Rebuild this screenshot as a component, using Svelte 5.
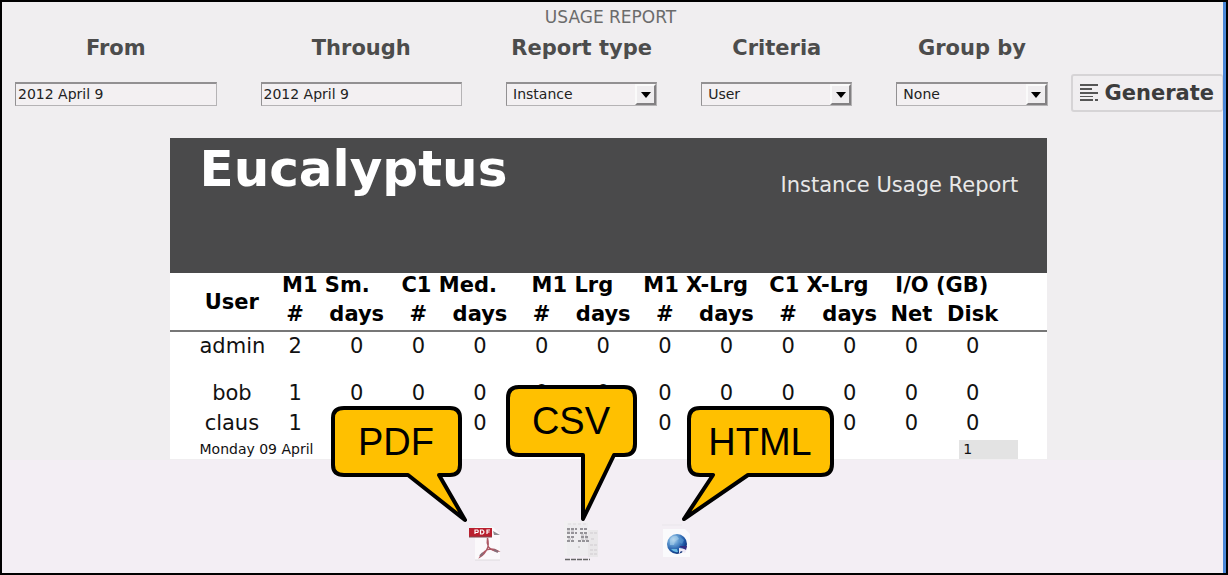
<script>
  let from = $state('2012 April 9');
  let through = $state('2012 April 9');
  let reportType = $state('Instance');
  let criteria = $state('User');
  let groupBy = $state('None');

  const groups = ['M1 Sm.', 'C1 Med.', 'M1 Lrg', 'M1 X-Lrg', 'C1 X-Lrg', 'I/O (GB)'];
  const units = ['#', 'days', '#', 'days', '#', 'days', '#', 'days', '#', 'days', 'Net', 'Disk'];
  const rows = [
    { user: 'admin', values: [2, 0, 0, 0, 0, 0, 0, 0, 0, 0, 0, 0] },
    { user: 'bob', values: [1, 0, 0, 0, 0, 0, 0, 0, 0, 0, 0, 0] },
    { user: 'claus', values: [1, 0, 0, 0, 0, 0, 0, 0, 0, 0, 0, 0] }
  ];
</script>

{#snippet arrow()}
  <span class="arrow" aria-hidden="true">
    <svg viewBox="0 0 10 6" width="10" height="6"><path d="M0 0H10L5 6Z" fill="#000" /></svg>
  </span>
{/snippet}

<main class="page">
  <h1>USAGE REPORT</h1>

  <form class="filters" onsubmit={(e) => e.preventDefault()}>
    <div class="fields">
      <div class="field">
        <label for="from">From</label>
        <input id="from" type="text" bind:value={from} />
      </div>
      <div class="field">
        <label for="through">Through</label>
        <input id="through" type="text" bind:value={through} />
      </div>
      <div class="field">
        <label for="type">Report type</label>
        <div class="pick">
          <select id="type" bind:value={reportType}><option>Instance</option></select>
          {@render arrow()}
        </div>
      </div>
      <div class="field">
        <label for="criteria">Criteria</label>
        <div class="pick">
          <select id="criteria" bind:value={criteria}><option>User</option></select>
          {@render arrow()}
        </div>
      </div>
      <div class="field">
        <label for="group">Group by</label>
        <div class="pick">
          <select id="group" bind:value={groupBy}><option>None</option></select>
          {@render arrow()}
        </div>
      </div>
    </div>
    <button type="submit">
      <svg viewBox="0 0 19 20" width="19" height="20" aria-hidden="true">
        <g fill="#555">
          <rect x="0" y="1" width="18" height="2" />
          <rect x="0" y="5" width="12" height="2" />
          <rect x="0" y="9" width="18" height="2" />
          <rect x="0" y="13" width="13" height="1" />
          <rect x="0" y="16" width="13" height="2" />
          <rect x="15" y="16" width="3" height="2" />
        </g>
      </svg>
      Generate
    </button>
  </form>

  <section class="lower">
    <article class="report">
      <header>
        <h2>Eucalyptus</h2>
        <p>Instance Usage Report</p>
      </header>
      <table>
        <colgroup>
          <col class="user-col" />
          {#each units.slice(1) as _}<col class="value-col" />{/each}
          <col />
        </colgroup>
        <thead>
          <tr>
            <th class="name" rowspan="2" scope="col">User</th>
            {#each groups as group}<th colspan="2" scope="colgroup">{group}</th>{/each}
          </tr>
          <tr>
            {#each units as unit}<th scope="col">{unit}</th>{/each}
          </tr>
        </thead>
        <tbody>
          {#each rows as row}
            <tr>
              <td class="name">{row.user}</td>
              {#each row.values as value}<td>{value}</td>{/each}
            </tr>
          {/each}
        </tbody>
      </table>
      <footer>
        <span>Monday 09 April</span>
        <span class="page-number">1</span>
      </footer>
    </article>

    <nav aria-label="Download">
      <a href="#pdf">
        <svg class="icon" viewBox="0 0 34 42" width="34" height="42" aria-hidden="true">
          <path d="M2 4H24V7H2Z" fill="#eaf1f1" />
          <path d="M7 6H25L32 13V39H7Z" fill="#fbf9fb" />
          <path d="M7 39H32" stroke="#dedadd" />
          <path d="M25 10L32 14L26 14Z" fill="#8f8c91" />
          <rect x="1" y="7" width="23" height="9" fill="#b9202f" />
          <path d="M1 16H24" stroke="#7d4a50" />
          <path d="M7 13V9H9.500Q11 10 9.500 11.500H7M12.500 9V13H14.500Q17.500 11 14.500 9ZM19 13V9H22M19 11H21.500" fill="none" stroke="#fff" stroke-width="1.200" />
          <path d="M19.500 17Q21 24 19.500 27Q17 33 12 36Q14 32 19.500 28.500Q25 27 30 30Q24 30 20.500 26Q18.500 22 19.500 17" fill="none" stroke="#ae5965" stroke-width="1.400" />
          <path d="M12 35L15 32M26 29L30 31" stroke="#866e78" stroke-width="2" />
        </svg>
        <svg class="callout pdf" viewBox="330 404 142 120" width="142" height="120" role="img" aria-label="PDF">
          <path d="M345 408H451Q461 408 461 418V465Q461 475 451 475H440L466 520L409 475H345Q334 475 334 465V418Q334 408 345 408Z" />
          <text x="397" y="455">PDF</text>
        </svg>
      </a>
      <a href="#csv">
        <svg class="icon" viewBox="0 0 34 42" width="34" height="42" aria-hidden="true">
          <path d="M0 0H26V35H0Z" fill="#f2f0f2" />
          <path d="M3 2H24V35H3Z" fill="#eeedef" />
          <path d="M4 3H22" stroke="#dedcde" stroke-dasharray="3 2" />
          <path d="M24 9H34V36H24Z" fill="#e9e7e9" />
          <path d="M26 12H33M27 18H31M26 24H33M26 29H33M26 33H33" stroke="#dcd9dc" stroke-width="2" stroke-dasharray="3 1" />
          <path d="M3 8H13M16 8H23M3 12H13M16 12H24M3 16H10M17 16H24M3 20H10M14 20H26" stroke="#959398" stroke-width="2" stroke-dasharray="3 1" />
          <path d="M3 10H11M17 14H23M4 18H9M17 18H25" stroke="#b7b4b9" stroke-dasharray="3 1" />
          <path d="M15 25V27" stroke="#bbb" />
          <path d="M1 38.500H26" stroke="#666" stroke-width="1.500" stroke-dasharray="5 1" />
        </svg>
        <svg class="callout csv" viewBox="504 383 136 141" width="136" height="141" role="img" aria-label="CSV">
          <path d="M519 387H624Q635 387 635 398V444Q635 455 624 455H614L583 519V455H519Q508 455 508 444V398Q508 387 519 387Z" />
          <text x="571" y="434">CSV</text>
        </svg>
      </a>
      <a href="#html">
        <svg class="icon" viewBox="0 0 34 42" width="34" height="42" aria-hidden="true">
          <defs>
            <radialGradient id="globe" cx="32%" cy="28%" r="80%">
              <stop offset="0" stop-color="#cbe1f2" />
              <stop offset="0.300" stop-color="#68a1d5" />
              <stop offset="0.700" stop-color="#1c56a5" />
              <stop offset="1" stop-color="#0b2669" />
            </radialGradient>
          </defs>
          <path d="M3 8H25L30 13V36H3Z" fill="#fafafc" />
          <path d="M2 4H22" stroke="#e9e6eb" />
          <circle cx="17" cy="23" r="10" fill="url(#globe)" />
          <path d="M10 18Q13 14 17 15L19 18L15 20L14 24L10 24Z" fill="#a9d1eb" opacity="0.600" />
          <path d="M20 16L24 19L22 23L19 21Z" fill="#5c9bd2" opacity="0.600" />
          <path d="M11 28Q14 32 18 31L17 28Z" fill="#69b9e1" />
          <path d="M19 27L27 28L25 32L21 30L19 33Z" fill="#ece8f5" />
          <path d="M19 25H27L26 29Z" fill="#352e83" />
        </svg>
        <svg class="callout html" viewBox="680 404 158 120" width="158" height="120" role="img" aria-label="HTML">
          <path d="M700 408H821Q832 408 832 419V464Q832 475 821 475H748L684 519L713 475H700Q689 475 689 464V419Q689 408 700 408Z" />
          <text x="760" y="455">HTML</text>
        </svg>
      </a>
    </nav>
  </section>
</main>

<style>
  :global(body) {
    margin: 0;
    font-family: "DejaVu Sans", sans-serif;
  }
  .page,
  .page * {
    box-sizing: border-box;
  }
  .page {
    border: 2px solid #000;
    background: linear-gradient(#4a87d8, #4a87d8) right / 3px 100% no-repeat #f0eef0;
    padding-right: 3px;
  }
  h1 {
    margin: 0;
    padding-right: 4px;
    font-size: 17px;
    line-height: 30px;
    font-weight: 400;
    text-align: center;
    color: #6b6b6b;
  }
  .filters {
    display: flex;
    align-items: flex-end;
    padding-left: 13px;
  }
  .fields {
    flex: 1;
    display: grid;
    grid-template-columns: 4fr 4fr 3fr 3fr 3fr;
    gap: 44px;
  }
  .field {
    min-width: 0;
    padding-bottom: 6px;
  }
  label {
    display: block;
    height: 50px;
    font-size: 21px;
    line-height: 32px;
    font-weight: 700;
    text-align: center;
    color: #4c4c4c;
    white-space: nowrap;
  }
  input,
  select {
    display: block;
    width: 100%;
    height: 24px;
    margin: 0;
    border: 1px solid #b5b3b5;
    border-top: 2px solid #929092;
    border-left-color: #929092;
    border-radius: 0;
    background: #f3f0f2;
    color: #222;
    font-family: inherit;
    font-size: 14px;
    padding: 0 2px 2px;
  }
  select {
    appearance: none;
    padding: 0 24px 2px 6px;
  }
  .pick {
    position: relative;
  }
  .arrow {
    position: absolute;
    top: 2px;
    right: 1px;
    bottom: 1px;
    width: 21px;
    display: flex;
    align-items: center;
    justify-content: center;
    border: 2px solid #fafafa;
    border-right-color: #828082;
    border-bottom-color: #828082;
    background: #efedef;
    pointer-events: none;
  }
  button {
    display: flex;
    align-items: center;
    gap: 6px;
    height: 38px;
    margin: 0 0 0 23px;
    padding: 0 8px 0 7px;
    border: 2px solid #d6d4d6;
    border-right-width: 1px;
    border-radius: 3px;
    background: #f0eef0;
    color: #3c3c3c;
    font-family: inherit;
    font-size: 21px;
    font-weight: 700;
  }
  .lower {
    margin-top: 26px;
    background: linear-gradient(#f0eef0, #f0eef0) top / 100% 322px no-repeat #f3eef4;
  }
  .report {
    margin: 0 14.4% 0 13.8%;
    background: #fff;
    color: #111;
  }
  header {
    display: flex;
    justify-content: space-between;
    align-items: baseline;
    height: 135px;
    padding: 0 29px;
    background: #4a4a4b;
  }
  h2 {
    margin: 0;
    font-size: 50px;
    line-height: 62px;
    color: #fff;
  }
  header p {
    margin: 0;
    padding-top: 35px;
    font-size: 21px;
    line-height: 24px;
    color: #e8e8e8;
    align-self: flex-start;
  }
  table {
    width: 100%;
    table-layout: fixed;
    border-collapse: collapse;
    font-size: 21px;
  }
  .user-col {
    width: 10.7%;
  }
  .value-col {
    width: 7.03%;
  }
  th,
  td {
    height: 29px;
    padding: 0;
    line-height: 24px;
    text-align: center;
    white-space: nowrap;
  }
  th {
    color: #000;
    vertical-align: top;
  }
  tr > :last-child {
    padding-right: 44px;
  }
  .name {
    padding-left: 29px;
  }
  th.name {
    vertical-align: middle;
  }
  thead {
    border-bottom: 2px solid #777;
  }
  td {
    height: 30px;
  }
  tbody tr:first-child td {
    height: 47px;
    padding-top: 2px;
    vertical-align: top;
  }
  footer {
    display: flex;
    justify-content: space-between;
    align-items: flex-end;
    height: 21px;
    padding: 0 29px;
    font-size: 14px;
    line-height: 19px;
  }
  .page-number {
    width: 59px;
    padding-left: 4px;
    background: #e3e3e3;
  }
  nav {
    display: flex;
    justify-content: center;
    gap: 62px;
    padding: 62px 64px 10px 0;
  }
  nav a {
    position: relative;
    display: block;
    height: 42px;
  }
  .icon {
    display: block;
  }
  .callout {
    position: absolute;
    bottom: 39px;
    pointer-events: none;
  }
  .callout path {
    fill: #ffc000;
    stroke: #000;
    stroke-width: 4;
    stroke-linejoin: round;
  }
  .callout text {
    font: 38px "Liberation Sans", sans-serif;
    text-anchor: middle;
    fill: #000;
  }
  .pdf {
    left: -139px;
  }
  .csv {
    left: -60px;
  }
  .html {
    left: 20px;
  }
</style>
